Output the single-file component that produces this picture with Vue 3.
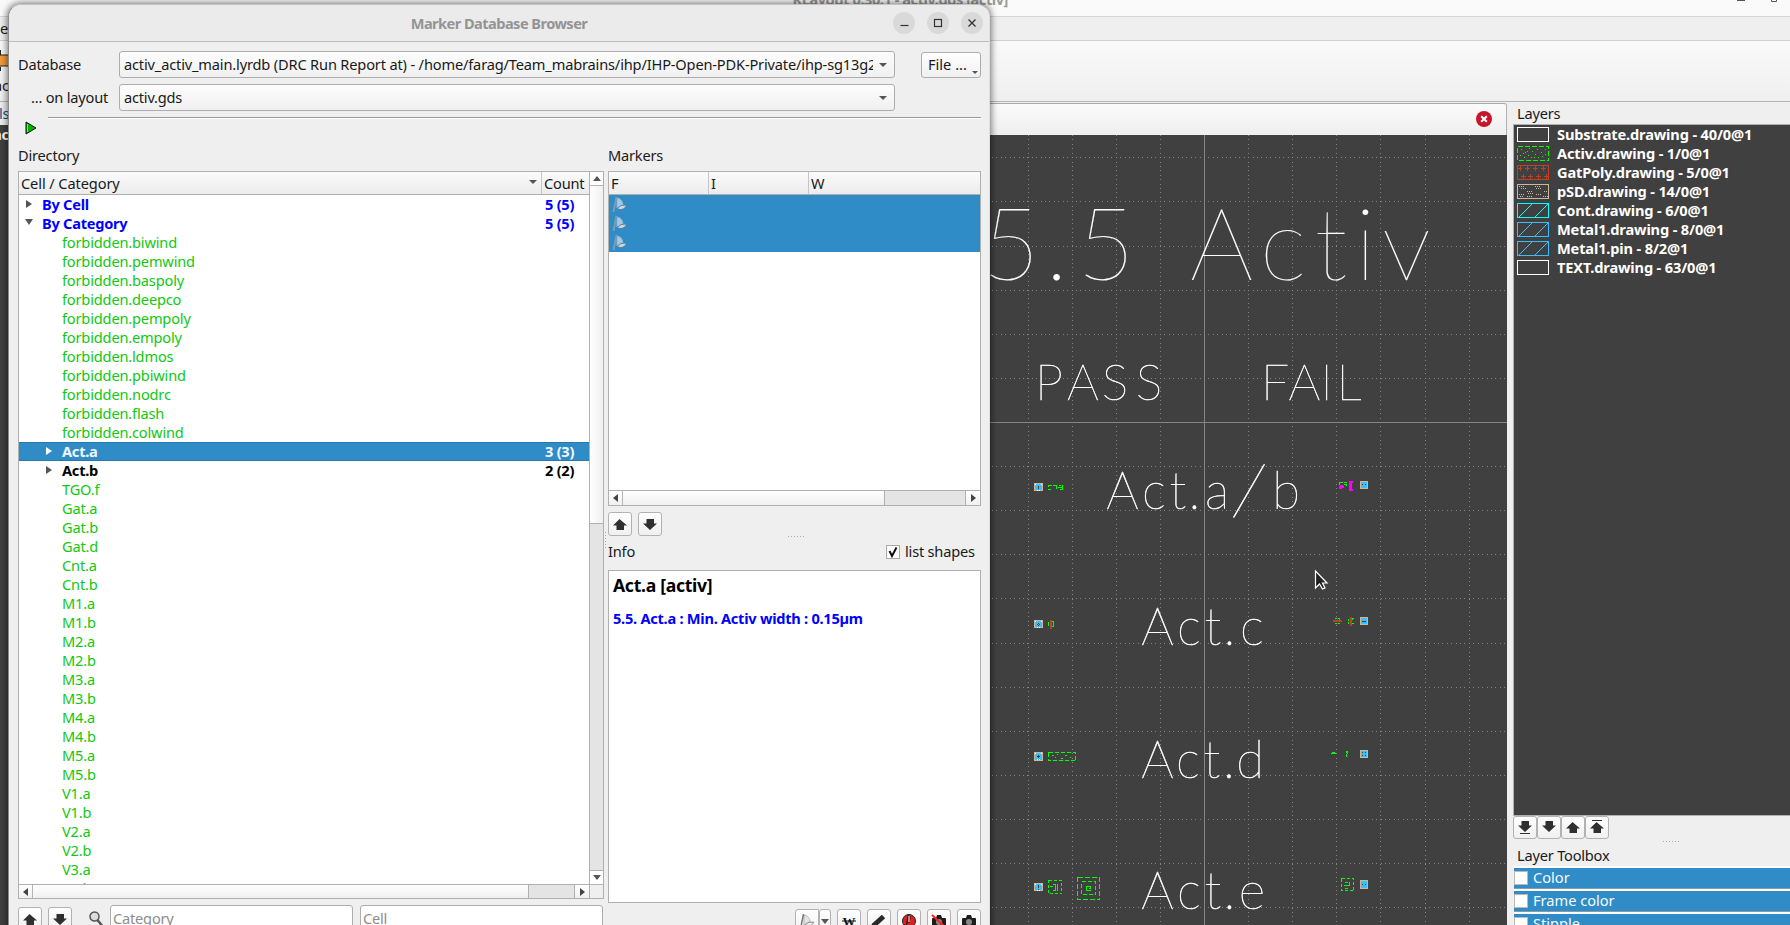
<script setup>
const range = (n) => Array.from({ length: n }, (_, i) => i)

const forbidden = ['biwind', 'pemwind', 'baspoly', 'deepco', 'pempoly', 'empoly', 'ldmos', 'pbiwind', 'nodrc', 'flash', 'colwind']
const rest = ['TGO.f', 'Gat.a', 'Gat.b', 'Gat.d', 'Cnt.a', 'Cnt.b', 'M1.a', 'M1.b', 'M2.a', 'M2.b', 'M3.a', 'M3.b', 'M4.a', 'M4.b', 'M5.a', 'M5.b', 'V1.a', 'V1.b', 'V2.a', 'V2.b', 'V3.a', 'V3.b']
const rows = [
  { text: 'By Cell', kind: 'top', arrow: 'right', count: '5 (5)' },
  { text: 'By Category', kind: 'top', arrow: 'down', count: '5 (5)' },
  ...forbidden.map((n) => ({ text: 'forbidden.' + n, kind: 'ok' })),
  { text: 'Act.a', kind: 'selected', arrow: 'right', count: '3 (3)' },
  { text: 'Act.b', kind: 'fail', arrow: 'right', count: '2 (2)' },
  ...rest.map((n) => ({ text: n, kind: 'ok' })),
]

const layers = [
  { name: 'Substrate.drawing - 40/0@1', color: '#ffffff', fill: '' },
  { name: 'Activ.drawing - 1/0@1', color: '#00ff00', fill: 'dots' },
  { name: 'GatPoly.drawing - 5/0@1', color: '#bf4026', fill: 'plus' },
  { name: 'pSD.drawing - 14/0@1', color: '#ccb899', fill: 'weave' },
  { name: 'Cont.drawing - 6/0@1', color: '#00ffff', fill: 'diag' },
  { name: 'Metal1.drawing - 8/0@1', color: '#39bfff', fill: 'diag' },
  { name: 'Metal1.pin - 8/2@1', color: '#39bfff', fill: 'diag' },
  { name: 'TEXT.drawing - 63/0@1', color: '#ffffff', fill: '' },
]

// Dotted grid, drawn in window coordinates
const gridX = [1028, 1072, 1116, 1160, 1248, 1292, 1336, 1380, 1425, 1469]
const gridY = [157, 201, 246, 290, 334, 378, 466, 510, 554, 598, 643, 687, 731, 775, 819, 863, 907]
const step = 4.415
let grid = ''
for (const x of gridX) for (let k = -65; k < 115; k++) grid += `M${x} ${Math.round(422 + k * step)}h1v1h-1z`
for (const y of gridY) for (let k = -48; k < 69; k++) grid += `M${Math.round(1204 + k * step)} ${y}h1v1h-1z`

const labels = [
  { text: '5.5Activ', x: '1011 1056.5 1106 1221.5 1283 1331 1365.5 1406.5', y: 280, size: 100 },
  { text: 'PASS', x: '1049 1083 1115 1149', y: 400, size: 50 },
  { text: 'FAIL', x: '1275 1304.5 1326.5 1349', y: 400, size: 50 },
  { text: 'Act.a', tail: true, x: '1122.5 1154 1178 1194.5 1217', y: 508.5, size: 51 },
  { text: 'Act.c', x: '1157.5 1189 1213 1229.5 1252', y: 644.5, size: 51 },
  { text: 'Act.d', x: '1157.5 1188 1212 1229 1250', y: 777.5, size: 51 },
  { text: 'Act.e', x: '1157.5 1189 1213 1229.5 1252', y: 908.5, size: 51 },
]

const pads = [
  { x: 1034, y: 483, h: 8, d: 'M4 3h1v3h-1z' },
  { x: 1034, y: 620, h: 8, d: 'M4 3h1v1h-1zM3 4h1v1h-1zM5 4h1v1h-1zM4 5h1v1h-1z' },
  { x: 1034, y: 752, h: 9, d: 'M4 3h1v3h-1zM3 4h3v1h-3z' },
  { x: 1034, y: 883, h: 8, d: 'M4 2h1v3h-1zM4 6h1v1h-1z' },
  { x: 1360, y: 481, h: 8, d: 'M2 3h1v1h-1zM5 3h1v1h-1z' },
  { x: 1360, y: 617, h: 8, d: 'M2 4h4v1h-4z' },
  { x: 1360, y: 750, h: 8, d: 'M2 2h1v1h-1zM5 2h1v1h-1zM2 5h1v1h-1zM5 5h1v1h-1z' },
  { x: 1360, y: 880, h: 9, d: 'M2 4h1v1h-1zM5 4h1v1h-1z' },
]
const tools = ['w', 'pen', 'alert', 'nocam', 'cam']
const UP = 'M0 6.5L6.5 0L14 6.5H11V11H3.5V6.5Z'
const DOWN = 'M3.5 0H11V4.5H14L7 11L0 4.5H3.5Z'
</script>

<template>
  <div class="screen">
    <div class="main-window">
      <div class="main-title"><span>KLayout 0.30.1 - activ.gds [activ]</span>
        <svg class="main-ctl" width="60" height="4"><path d="M7 0.500h8M41.500 0v1.500h5V0" fill="none" stroke="#555" /></svg>
      </div>
      <div class="menubar"><span>e</span></div>
      <div class="toolbar">
        <svg width="9" height="30" viewBox="0 0 9 30"><path d="M0 8V0M0 21v-4" stroke="#222" stroke-width="2" /><rect x="-1" y="5" width="12" height="11" fill="#f09a3a" stroke="#222" /></svg>
        <span>ac</span>
      </div>
      <div class="body">
        <div class="left-strip"><span class="ls">ls</span><div class="dark"><b>ac</b></div></div>
        <div class="center">
          <div class="tabbar">
            <svg width="16" height="16" viewBox="0 0 16 16"><circle cx="8" cy="8" r="8" fill="#c7162b" /><path d="M5.200 5.200l5.600 5.600M10.800 5.200l-5.600 5.600" stroke="#fff" stroke-width="2" /></svg>
          </div>
          <svg class="canvas" width="517" height="790" viewBox="990 135 517 790">
            <rect x="990" y="135" width="517" height="790" fill="#404040" />
            <path :d="grid" fill="#858585" shape-rendering="crispEdges" />
            <path d="M1204 135h1v790h-1zM990 422h517v1h-517z" fill="#858585" shape-rendering="crispEdges" />
            <text v-for="l in labels" :key="l.y + l.text" class="stroke-text" :class="{ big: l.size > 90 }" :x="l.x" :y="l.y" :font-size="l.size">{{ l.text }}<template v-if="l.tail"><tspan x="1246" y="514" rotate="7" font-size="74">/</tspan><tspan x="1286" y="508.5">b</tspan></template></text>
            <g shape-rendering="crispEdges">
              <g v-for="p in pads" :key="p.x + '-' + p.y" :transform="`translate(${p.x} ${p.y})`">
                <rect :width="p.x < 1100 ? 9 : 8" :height="p.h" fill="#ccb899" />
                <rect x="1" y="1" :width="p.x < 1100 ? 7 : 6" :height="p.h - 2" fill="#39bfff" />
                <path v-if="p.x < 1100" d="M1 3h1v3h-1zM7 3h1v3h-1z" fill="#00ff40" />
                <path v-if="p.x < 1100" d="M1 1h1v1h-1zM7 1h1v1h-1zM3 7h1v1h-1zM5 7h1v1h-1z" fill="#fff" />
                <path :d="p.d" fill="#404040" />
              </g>
              <g fill="none" stroke="#00ff00">
                <path d="M1048 485.500h4M1048 489.500h3M1053 485.500h3M1056.500 485v4M1058 487.500h5M1059 485.500h2M1060 489.500h3M1048.500 486v1M1062.500 485v2M1062.500 488v2" />
                <path d="M1339 482.500h4M1344 482.500h3M1339.500 482v3M1344 484.500h3M1346.500 484v2" />
                <path d="M1048.500 622v4M1052 621.500h1.500v5h-1.500" />
                <path d="M1334.500 621v-1M1335 618.500h2M1338 618.500h2M1339.500 619v1M1335 623.500h2M1338 623.500h2M1348.500 619v2M1348.500 622v2M1352 618.500h2M1352.500 619v1M1352 623.500h2" />
                <path d="M1048.500 752.500h27v8h-27z" stroke-dasharray="4 2" />
                <path d="M1052 755.500h2M1057 754.500h1M1061 758.500h2M1065 755.500h2M1070 757.500h1M1055 757.500h1" />
                <path d="M1331 753.500h5M1332 752.500h3M1347 750.500v3M1346.500 751v2M1346.500 754v3" />
                <path d="M1048.500 880.500h13v13h-13z" stroke-dasharray="3 2" />
                <path d="M1053 884.500h2v6h-2M1057.500 884v7M1050 886.500h3" />
                <path d="M1077.500 877.500h22v22h-22z" stroke-dasharray="5 2" />
                <path d="M1081.500 881.500h14v13h-14z" stroke-dasharray="4 2" />
                <path d="M1086.500 886.500h4v2h-2M1086.500 886v4.500h4" />
                <path d="M1341.500 878.500h12v12h-12z" stroke-dasharray="3 2" />
                <path d="M1345 882.500h3M1349 881.500v4M1344 885.500h6M1345 888.500h3" />
              </g>
              <path d="M1349 481h4v2h-1v6h1v2h-4zM1340 485h3v1h1v2h-2v1h-3v-3h1z" fill="#ff00ff" />
              <path d="M1050 620h2v9h-2zM1333 620h9v2h-9zM1350 617h2v9h-2z" fill="#bf4026" />
            </g>
            <path d="M1315.500 571v17l4-4 3 5 2.500-1-2.500-5h4.500z" fill="#222" stroke="#fff" stroke-width="1.200" />
          </svg>
        </div>
        <aside class="side">
          <div class="side-label">Layers</div>
          <ul class="layers">
            <li v-for="l in layers" :key="l.name">
              <svg width="32" height="15" viewBox="0 0 32 15" shape-rendering="crispEdges" fill="none" :stroke="l.color">
                <rect x=".5" y=".5" width="31" height="14" :stroke-dasharray="l.fill === 'dots' ? '5 2' : undefined" />
                <path v-if="l.fill === 'diag'" d="M2 14L15 1M18 14L31 1" shape-rendering="auto" />
                <path v-if="l.fill === 'plus'" d="M1 3.500h4M3 1v5M8 3.500h5M10.500 1v5M16 3.500h5M18.500 1v5M24 3.500h5M26.500 1v5M4 11.500h5M6.500 9v5M11 11.500h5M13.500 9v5M19 11.500h5M21.500 9v5M27 11.500h4M29.500 9v5" />
                <path v-if="l.fill === 'dots'" d="M4 3.500h1M8 6.500h1M12 2.500h1M15 5.500h1M20 3.500h1M24 6.500h1M28 3.500h1M3 9.500h1M7 11.500h1M11 9.500h1M14 11.500h1M18 8.500h1M21 11.500h1M25 10.500h1M28 8.500h1M10 5.500h1M17 11.500h1M6 7.500h1" />
                <path v-if="l.fill === 'weave'" stroke-dasharray="1 1" d="M2 2.500h5M4 4.500h5M18 2.500h5M19 4.500h5M10 7.500h6M11 9.500h6M27 7.500h4M2 10.500h5M19 10.500h5M10 12.500h5M26 12.500h5M3 12.500h3" />
              </svg>
              <b>{{ l.name }}</b>
            </li>
          </ul>
          <div class="side-buttons">
            <i v-for="n in 4" :key="n" class="btn">
              <svg width="14" height="15" viewBox="0 0 14 15"><path :d="n < 3 ? DOWN : UP" :transform="`translate(0 ${n < 3 ? 1 : 2})`" fill="#2f2f2f" /><path v-if="n === 1" d="M2 13.500h10" stroke="#2f2f2f" /><path v-if="n === 4" d="M2 .500h10" stroke="#2f2f2f" /></svg>
            </i>
          </div>
          <div class="grip side-grip"></div>
          <div class="side-label toolbox">Layer Toolbox</div>
          <div v-for="t in ['Color', 'Frame color', 'Stipple']" :key="t" class="tool-row"><i></i><span>{{ t }}</span></div>
        </aside>
      </div>
    </div>

    <div class="dialog">
      <header>
        <b>Marker Database Browser</b>
        <div class="wbtns">
          <i><svg width="22" height="22"><path d="M7.500 13.500h8" stroke="#333" stroke-width="1.200" /></svg></i>
          <i><svg width="22" height="22"><rect x="7.500" y="7.500" width="7" height="7" fill="none" stroke="#333" stroke-width="1.200" /></svg></i>
          <i><svg width="22" height="22"><path d="M7.500 7.500l7 7M14.500 7.500l-7 7" stroke="#333" stroke-width="1.300" /></svg></i>
        </div>
      </header>
      <div class="form-row">
        <label class="l1">Database</label>
        <div class="combo"><span class="path">activ_activ_main.lyrdb (DRC Run Report at) - /home/farag/Team_mabrains/ihp/IHP-Open-PDK-Private/ihp-sg13g2</span><i class="tri"></i></div>
        <div class="file">File ...<i class="tri small"></i></div>
      </div>
      <div class="form-row second">
        <label class="l2">... on layout</label>
        <div class="combo"><span>activ.gds</span><i class="tri"></i></div>
      </div>
      <div class="run-row">
        <svg width="12" height="14" viewBox="0 0 12 14"><path d="M1 1v12l10-6z" fill="#00b400" stroke="#111" /><path d="M2.500 3v8" stroke="#6e6" /></svg>
        <hr />
      </div>
      <div class="panes">
        <section class="dir">
          <h4 class="w-dir">Directory</h4>
          <div class="tree">
            <div class="tree-main">
              <div class="thead"><span class="c1">Cell / Category<i class="tri"></i></span><span>Count</span></div>
              <div class="trows">
                <div v-for="r in rows" :key="r.text" class="trow" :class="r.kind">
                  <i v-if="r.arrow" :class="['arr', r.arrow]"></i>
                  <span class="name">{{ r.text }}</span>
                  <span class="count">{{ r.count }}</span>
                </div>
              </div>
              <div class="hscroll">
                <i class="sb"><b class="al"></b></i><i class="handle"></i><i class="groove dirgroove"></i><i class="sb last"><b class="ar"></b></i>
              </div>
            </div>
            <div class="vscroll">
              <i class="vb"><b class="au"></b></i><i class="vhandle"></i><i class="vgroove"></i><i class="vb vlast"><b class="ad"></b></i><i class="corner"></i>
            </div>
          </div>
          <div class="dir-foot">
            <i class="btn"><svg width="14" height="11"><path :d="UP" fill="#2f2f2f" /></svg></i>
            <i class="btn"><svg width="14" height="11"><path :d="DOWN" fill="#2f2f2f" /></svg></i>
            <svg class="mag" width="15" height="16" viewBox="0 0 15 16"><path d="M8 8.500l5 6" stroke="#555" stroke-width="2.500" /><circle cx="5.500" cy="5.500" r="4.500" fill="#ddd" stroke="#555" stroke-width="1.500" /></svg>
            <div class="inp">Category</div><div class="inp">Cell</div>
          </div>
        </section>
        <div class="vgrip"></div>
        <section class="mk">
          <h4>Markers</h4>
          <div class="table">
            <div class="thead"><span class="m1">F</span><span class="m2">I</span><span>W</span></div>
            <div class="mrows">
              <div v-for="i in range(3)" :key="i" class="mrow">
                <svg width="16" height="17" viewBox="0 0 16 17"><path d="M5 2C8.500 2.500 11 5.500 11 9L5 12z" fill="#a5c9e2" stroke="#8fb6d2" /><path d="M5 12.500l4-3 5.500-.5c-1 3.500-5 6-9.500 3.500z" fill="#c3d9e8" stroke="#52718a" stroke-width=".8" /><path d="M4.500 1L1.500 16" stroke="#7a9cb5" stroke-width="2" /></svg>
              </div>
            </div>
            <div class="hscroll">
              <i class="sb"><b class="al"></b></i><i class="handle"></i><i class="groove mkgroove"></i><i class="sb last"><b class="ar"></b></i>
            </div>
          </div>
          <div class="mk-buttons">
            <i class="btn"><svg width="14" height="11"><path :d="UP" fill="#2f2f2f" /></svg></i>
            <i class="btn"><svg width="14" height="11"><path :d="DOWN" fill="#2f2f2f" /></svg></i>
          </div>
          <div class="grip mk-grip"></div>
          <div class="info-head"><span>Info</span><i class="check"><svg width="14" height="14" viewBox="0 0 14 14"><path d="M3.500 6l2.500 5L10.500 2.500" fill="none" stroke="#111" stroke-width="2" /></svg></i><span class="ls">list shapes</span></div>
          <div class="info"><h3>Act.a [activ]</h3><p>5.5. Act.a : Min. Activ width : 0.15µm</p></div>
          <div class="mk-foot">
            <i class="btn flag"><svg width="16" height="17" viewBox="0 0 16 17"><path d="M5 2C8.500 2.500 11 5.500 11 9L5 12z" fill="#e4e4e4" stroke="#b5b5b5" /><path d="M5 13l4-3.500 5.500-.5c-1 3.500-5 6-9.500 4z" fill="#eee" stroke="#888" /><path d="M4.500 1L1.500 16" stroke="#777" stroke-width="1.500" /></svg></i>
            <i class="btn drop"><b class="ad"></b></i>
            <i v-for="t in tools" :key="t" class="btn">
              <svg width="16" height="16" viewBox="0 0 16 16">
                <g v-if="t === 'w'" class="wglyph"><text x="8" y="13" text-anchor="middle">W</text><path d="M1 8h14" stroke="#111" /></g>
                <path v-if="t === 'pen'" d="M2 13L12.500 3.500" stroke="#2a2a2a" stroke-width="5" />
                <g v-if="t === 'alert'"><circle cx="8" cy="8" r="6.500" fill="#e02020" stroke="#222" /><path d="M7.500 2l-2 10M9 3l-1 7" stroke="#222" stroke-width="1.500" /><path d="M8 3v6" stroke="#fff" /></g>
                <g v-if="t === 'cam' || t === 'nocam'"><rect x="1" y="5" width="14" height="10" rx="1" fill="#1c1c1c" /><path d="M5 5l1-3h4l1 3z" fill="#1c1c1c" /><circle cx="8" cy="9" r="3" fill="#888" /></g>
                <path v-if="t === 'nocam'" d="M1 2l13 12" stroke="#ff2020" stroke-width="2" />
              </svg>
            </i>
          </div>
        </section>
      </div>
    </div>
  </div>
</template>

<style>
html, body { margin: 0; overflow: hidden; background: #efefef; }
</style>

<style scoped>
* { box-sizing: border-box; }
i { font-style: normal; }
svg { display: block; flex: none; }
.screen { position: relative; width: 1790px; height: 925px; overflow: hidden; font-family: "Noto Sans", "Open Sans", sans-serif; font-size: 14.6px; line-height: 19px; letter-spacing: -0.2px; color: #1a1a1a; white-space: nowrap; background: #efefef; }
.main-window { display: flex; flex-direction: column; height: 925px; }
.main-title { height: 17px; flex: none; background: #fafafa; border-bottom: 1px solid #d6d6d6; display: flex; overflow: hidden; color: #999; font-weight: 700; justify-content: flex-end; letter-spacing: -.45px; }
.main-title span { margin: -10px 722px 0 0; }
.menubar { height: 24px; flex: none; border-bottom: 1px solid #d0d0d0; padding-top: 2px; }
.toolbar { height: 61px; flex: none; border-bottom: 1px solid #b4b4b4; background: linear-gradient(#fafafa, #efefef); padding-top: 9px; display: flex; flex-direction: column; }
.toolbar span { margin: -4px 0 0 -6px; }
.body { flex: 1; display: flex; min-height: 0; }
.left-strip { width: 990px; display: flex; flex-direction: column; }
.left-strip .ls { height: 23px; padding-top: 2px; margin-left: -1px; color: #15508a; }
.dark { flex: 1; background: #404040; color: #fff; }
.dark b { margin-left: -7px; }
.center { width: 517px; padding-top: 1px; }
.tabbar { height: 32px; border-top: 1px solid #a8a8a8; border-right: 1px solid #b0b0b0; border-radius: 0 3px 0 0; background: linear-gradient(#fafafa, #efefef); display: flex; justify-content: flex-end; padding: 7px 14px 0 0; }
.stroke-text { font-family: Lato, sans-serif; font-weight: 100; fill: #fff; stroke: #fff; stroke-width: .5px; text-anchor: middle; letter-spacing: 0; }
.stroke-text.big { stroke-width: .1px; }
.side { width: 283px; padding-left: 6px; display: flex; flex-direction: column; }
.side > * { flex: none; }
.side-label { height: 22px; padding: 2px 0 0 4px; }
.layers { list-style: none; margin: 0; height: 692px; padding: 0 0 0 3px; border: 1px solid #b0b0b0; border-right: 0; background: #404040; color: #fff; }
.layers li { height: 19px; display: flex; align-items: center; gap: 8px; letter-spacing: -0.15px; }
.side-buttons { display: flex; height: 23px; }
.btn { width: 24px; height: 24px; border: 1px solid #b2b2b2; border-radius: 3px; background: linear-gradient(#fff, #f0f0f0); display: flex; align-items: center; justify-content: center; flex: none; }
.side-buttons .btn { height: 23px; }
.grip { width: 17px; height: 1px; background: repeating-linear-gradient(90deg, #aaa 0 1px, transparent 1px 3px); }
.side-grip { margin: 2px 0 0 150px; }
.side .toolbox { height: 24px; padding-top: 4px; }
.tool-row { height: 23px; background: #308cc6; border-top: 1px solid #fff; border-bottom: 1px solid #8b9aa5; box-shadow: inset 0 1px #fff; color: #f4fbff; display: flex; align-items: center; gap: 5px; margin-left: 1px; letter-spacing: 0; }
.tool-row i { width: 14px; height: 14px; background: #fff; border: 1px solid #b9b9b9; }

.dialog { position: absolute; left: 8px; top: 4px; width: 982px; height: 930px; border: 1px solid #c2c2c2; border-left-color: #8c8c8c; border-right-color: #dedede; border-radius: 13px 13px 0 0; background: #efefef; box-shadow: 0 0 7px 1px rgba(0, 0, 0, .55); display: flex; flex-direction: column; padding-right: 8px; }
header { height: 37px; margin-right: -8px; border-bottom: 1px solid #bcbcbc; background: #ebebeb; border-radius: 12px 12px 0 0; display: grid; grid-template-columns: 1fr auto 1fr; align-items: center; color: #949494; letter-spacing: -.55px; flex: none; }
header b { grid-column: 2; }
.wbtns { display: flex; gap: 12px; justify-self: end; margin-right: 6px; }
.wbtns i { width: 22px; height: 22px; border-radius: 50%; background: #d9d9d9; }
.form-row { display: flex; align-items: center; margin-top: 9px; height: 27px; padding-left: 9px; flex: none; }
.second { margin-top: 6px; }
.form-row label { width: 101px; }
.form-row .l2 { padding-left: 13px; }
.combo { width: 776px; height: 27px; border: 1px solid #adadad; border-radius: 3px; background: linear-gradient(#fdfdfd, #f0f0f0); padding: 0 7px 0 4px; display: flex; align-items: center; justify-content: space-between; }
.combo .path { width: 749px; overflow: hidden; letter-spacing: -.16px; }
.tri { width: 0; height: 0; border: 4px solid transparent; border-top: 4px solid #555; border-bottom: 0; flex: none; }
.file { margin-left: 26px; width: 60px; height: 26px; border: 1px solid #adadad; border-radius: 3px; background: linear-gradient(#fff, #f0f0f0); padding: 2px 0 0 6px; position: relative; letter-spacing: 0; }
.tri.small { position: absolute; right: 2px; bottom: 3px; border-width: 3px 3px 0; }
.run-row { display: flex; height: 35px; padding: 5px 0 0 16px; flex: none; }
.run-row svg { margin-top: 5px; }
.run-row hr { margin: 1px 0 0 11px; flex: 1; height: 2px; border: 0; border-top: 1px solid #989898; background: #fff; }
.panes { display: flex; padding-left: 9px; }
h4 { margin: 0; height: 25px; font-weight: 400; padding: 0; }
.dir { width: 586px; }
.tree { display: flex; height: 728px; border: 1px solid #b0b0b0; background: #fff; }
.tree-main { width: 571px; display: flex; flex-direction: column; }
.thead { height: 23px; flex: none; border-bottom: 1px solid #b0b0b0; background: linear-gradient(#fbfbfb, #ececec); display: flex; line-height: 23px; }
.thead span { padding-left: 2px; border-right: 1px solid #c6c6c6; }
.thead span:last-child { border: 0; }
.thead .c1 { width: 523px; display: flex; align-items: center; justify-content: space-between; padding-right: 4px; letter-spacing: -.1px; }
.thead .c1 .tri { margin-top: -3px; }
.trows { flex: 1; overflow: hidden; min-height: 0; }
.trow { height: 19px; position: relative; display: flex; padding-left: 23px; font-weight: 700; color: #000; letter-spacing: -.25px; }
.trow .name { width: 503px; flex: none; }
.trow.ok { padding-left: 43px; font-weight: 400; color: #12c812; letter-spacing: -.17px; }
.trow.top { color: #00f; }
.trow.fail, .trow.selected { padding-left: 43px; }
.trow.fail .name, .trow.selected .name { width: 483px; }
.trow.selected { background: #308cc6; box-shadow: inset 0 1px #2a78ab, inset 0 -1px #2a78ab; color: #f2f9ff; }
.arr { position: absolute; left: 7px; top: 5px; border: 4px solid transparent; }
.arr.right { border-left: 6px solid #555; border-right: 0; }
.arr.down { border-top: 6px solid #555; border-bottom: 0; left: 6px; }
.fail .arr, .selected .arr { left: 27px; }
.selected .arr.right { border-left-color: #fff; }
.hscroll { height: 15px; flex: none; border-top: 1px solid #b0b0b0; display: flex; background: #fff; }
.tree .hscroll { height: 14px; }
.sb { width: 14px; border-right: 1px solid #b5b5b5; display: flex; align-items: center; justify-content: center; background: linear-gradient(#fff, #f0f0f0); flex: none; }
.handle { flex: 1; background: linear-gradient(#fff, #f0f0f0); border-right: 1px solid #b0b0b0; }
.groove { background: #e4e4e4; border-right: 1px solid #b0b0b0; flex: none; }
.dirgroove { width: 46px; }
.mkgroove { width: 81px; }
.al, .ar, .au, .ad { border: 4px solid transparent; }
.al { border-right: 5px solid #444; border-left: 0; }
.ar { border-left: 5px solid #444; border-right: 0; }
.au { border-bottom: 5px solid #555; border-top: 0; }
.ad { border-top: 5px solid #555; border-bottom: 0; }
.vscroll { width: 14px; border-left: 1px solid #b0b0b0; display: flex; flex-direction: column; }
.vb { height: 14px; display: flex; align-items: center; justify-content: center; border-bottom: 1px solid #b5b5b5; flex: none; }
.vhandle { height: 338px; border-bottom: 1px solid #b0b0b0; background: linear-gradient(90deg, #fff, #f0f0f0); flex: none; }
.vgroove { flex: 1; background: #e4e4e4; border-bottom: 1px solid #b0b0b0; }
.corner { height: 13px; background: #efefef; }
.sb.last { border-right: 0; }
.dir-foot { display: flex; padding-top: 6px; }
.dir-foot .btn { margin: 2px 6px 0 0; }
.mag { margin: 6px 6px 0 11px; }
.inp { width: 243px; height: 28px; border: 1px solid #adadad; border-radius: 3px; background: #fff; color: #8d8d8d; padding: 3px 2px; }
.inp + .inp { margin-left: 7px; }
.vgrip { width: 1px; height: 17px; margin: 386px 2px 0 1px; background: repeating-linear-gradient(#aaa 0 1px, transparent 1px 3px); }
.mk { width: 373px; }
.table { height: 335px; border: 1px solid #b0b0b0; background: #fff; display: flex; flex-direction: column; }
.table .m1, .table .m2 { width: 100px; }
.mrows { flex: 1; }
.mrow { height: 19px; background: #308cc6; padding: 1px 0 0 3px; }
.mk-buttons { display: flex; gap: 6px; padding-top: 6px; }
.mk-grip { margin: 0 0 0 180px; }
.info-head { display: flex; height: 33px; padding: 5px 0 0; }
.check { width: 14px; height: 14px; border: 1px solid #aaa; background: #fff; margin: 3px 5px 0 auto; }
.check svg { margin: -1px; }
.info-head .ls { width: 76px; }
.info { height: 333px; border: 1px solid #b0b0b0; background: #fff; padding: 3px 0 0 4px; }
.info h3 { margin: 0; font-size: 17.6px; line-height: 22px; letter-spacing: -.3px; color: #000; }
.info p { margin: 13px 0 0; font-weight: 700; color: #00f; letter-spacing: -.26px; }
.mk-foot { display: flex; gap: 6px; padding: 6px 0 0; justify-content: flex-end; }
.flag { margin-right: -6px; border-radius: 3px 0 0 3px; }
.drop { width: 12px; }
.wglyph text { font: 700 13px "Liberation Serif", serif; letter-spacing: 0; fill: #111; }
</style>
